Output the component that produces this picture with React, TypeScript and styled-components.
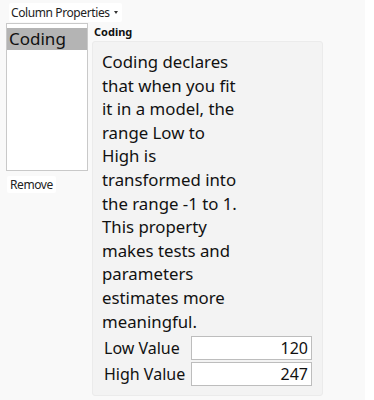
import React from "react";
import styled, { createGlobalStyle } from "styled-components";

const Global = createGlobalStyle`
  html, body { margin: 0; padding: 0; background: #ffffff; }
  body { font-family: "Noto Sans", "Open Sans", sans-serif; color: #1a1a1a; }
`;

const Page = styled.div`
  width: 365px;
  height: 400px;
  background: #f9f9f9;
  display: flex;
  flex-direction: column;
  padding: 3px 0 0 6px;
  box-sizing: border-box;
`;

const MenuButton = styled.div`
  align-self: flex-start;
  margin-left: 3px;
  height: 19px;
  padding: 0 4px 0 2px;
  background: #ffffff;
  border-radius: 2px;
  font-size: 12px;
  letter-spacing: -0.4px;
  line-height: 19px;
  display: flex;
  align-items: center;
  gap: 4px;
  color: #222;
`;

const Caret = styled.span`
  width: 0;
  height: 0;
  border-left: 2.5px solid transparent;
  border-right: 2.5px solid transparent;
  border-top: 3px solid #333;
`;

const Body = styled.div`
  display: flex;
  gap: 4px;
  margin-top: 1px;
`;

const LeftCol = styled.div`
  display: flex;
  flex-direction: column;
  align-items: flex-start;
  gap: 5px;
`;

const ListBox = styled.div`
  width: 82px;
  height: 148px;
  background: #ffffff;
  border: 1px solid #c9c9c9;
  box-sizing: border-box;
`;

const ListItem = styled.div<{ $selected?: boolean }>`
  height: 22px;
  margin-top: 4px;
  line-height: 22px;
  padding-left: 2px;
  font-size: 17px;
  background: ${(p) => (p.$selected ? "#b4b4b4" : "transparent")};
  color: #111;
`;

const SmallButton = styled.div`
  margin-left: 1px;
  font-size: 12px;
  letter-spacing: -0.4px;
  line-height: 17px;
  padding: 0 3px;
  background: #ffffff;
  border-radius: 2px;
  color: #222;
`;

const RightCol = styled.div`
  display: flex;
  flex-direction: column;
  padding-top: 2px;
`;

const SectionTitle = styled.div`
  font-size: 11px;
  font-weight: 700;
  line-height: 14px;
  padding-left: 2px;
  margin-bottom: 2px;
  color: #111;
`;

const Panel = styled.div`
  width: 231px;
  height: 355px;
  box-sizing: border-box;
  background: #f3f3f3;
  border: 1px solid #ebebeb;
  border-radius: 3px;
  padding: 8px 9px 0 9px;
  display: flex;
  flex-direction: column;
`;

const Description = styled.div`
  font-size: 16.8px;
  line-height: 23.6px;
  color: #111;
  padding-bottom: 2px;
`;

const Line = styled.span`
  display: block;
  white-space: nowrap;
`;

const FieldRow = styled.div`
  display: flex;
  align-items: center;
  height: 26px;
  padding-left: 2px;
`;

const FieldLabel = styled.div`
  width: 87px;
  font-size: 16px;
  line-height: 24px;
  color: #111;
  white-space: nowrap;
`;

const FieldInput = styled.div`
  width: 121px;
  height: 24px;
  box-sizing: border-box;
  background: #ffffff;
  border: 1px solid #bdbdbd;
  font-size: 16px;
  line-height: 22px;
  text-align: right;
  padding-right: 3px;
  color: #111;
`;

const lines = [
  "Coding declares",
  "that when you fit",
  "it in a model, the",
  "range Low to",
  "High is",
  "transformed into",
  "the range -1 to 1.",
  "This property",
  "makes tests and",
  "parameters",
  "estimates more",
  "meaningful.",
];

export default function App() {
  return (
    <>
      <Global />
      <Page>
        <MenuButton>
          Column Properties <Caret />
        </MenuButton>
        <Body>
          <LeftCol>
            <ListBox>
              <ListItem $selected>Coding</ListItem>
            </ListBox>
            <SmallButton>Remove</SmallButton>
          </LeftCol>
          <RightCol>
            <SectionTitle>Coding</SectionTitle>
            <Panel>
              <Description>
                {lines.map((l) => (
                  <Line key={l}>{l}</Line>
                ))}
              </Description>
              <FieldRow>
                <FieldLabel>Low Value</FieldLabel>
                <FieldInput>120</FieldInput>
              </FieldRow>
              <FieldRow>
                <FieldLabel>High Value</FieldLabel>
                <FieldInput>247</FieldInput>
              </FieldRow>
            </Panel>
          </RightCol>
        </Body>
      </Page>
    </>
  );
}
